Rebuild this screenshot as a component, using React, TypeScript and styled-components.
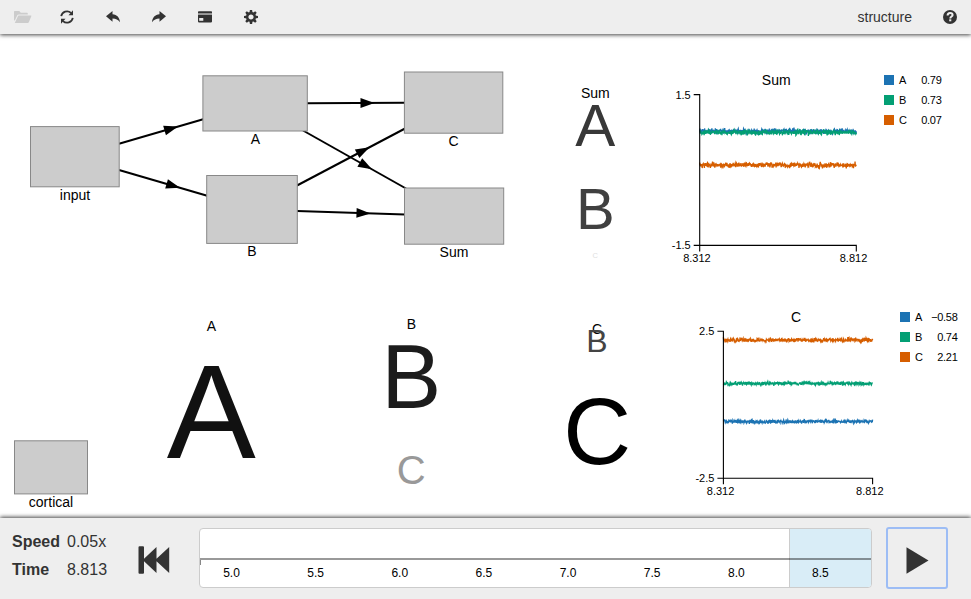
import React from 'react';
import styled, { createGlobalStyle } from 'styled-components';

const GlobalStyle = createGlobalStyle`
  html, body, #root { height: 100%; }
  body {
    margin: 0;
    overflow: hidden;
    background: #fff;
    color: #333;
    font: 14px/20px "Liberation Sans", Arial, sans-serif;
  }
  * { box-sizing: border-box; }
`;

const Page = styled.div`
  display: flex;
  flex-direction: column;
  height: 100vh;
`;

const Toolbar = styled.header`
  position: relative;
  display: flex;
  align-items: center;
  height: 34px;
  padding: 0 14px 0 0;
  background: #eee;
  box-shadow: 0 1px 4px #444;
`;

const ToolButton = styled.button<{ $disabled?: boolean }>`
  display: flex;
  align-items: center;
  justify-content: center;
  width: 46px;
  height: 34px;
  padding: 0 4px 0 0;
  border: 0;
  background: none;
  color: ${(p) => (p.$disabled ? '#ccc' : '#333')};

  &:first-child {
    padding-right: 1px;
  }
`;

const FileName = styled.span`
  margin: 0 31px 0 auto;
`;

const Canvas = styled.main`
  position: relative;
  flex: 1;
`;

const Layer = styled.svg`
  position: absolute;
  inset: 0;
  width: 971px;
  height: 484px;
`;

const Glyph = styled.div<{ $x: number; $y: number; $size: number; $color: string }>`
  position: absolute;
  left: ${(p) => p.$x - 100}px;
  top: ${(p) => p.$y - 34 - p.$size * 0.8465}px;
  width: 200px;
  text-align: center;
  font-size: ${(p) => p.$size}px;
  line-height: 1;
  color: ${(p) => p.$color};
`;

const Legend = styled.ul<{ $x: number; $y: number }>`
  position: absolute;
  left: ${(p) => p.$x}px;
  top: ${(p) => p.$y - 34}px;
  width: 57.5px;
  margin: 0;
  padding: 0;
  display: flex;
  flex-direction: column;
  gap: 10px;
  list-style: none;
  font-size: 11px;
  line-height: 10px;
  color: #000;
`;

const LegendRow = styled.li`
  display: flex;
  align-items: center;
  height: 10px;
`;

const Swatch = styled.span<{ $color: string }>`
  width: 10px;
  height: 10px;
  margin-right: 5px;
  background: ${(p) => p.$color};
`;

const LegendValue = styled.span`
  margin-left: auto;
  letter-spacing: -0.3px;
`;

const Footer = styled.footer`
  position: relative;
  display: flex;
  align-items: flex-start;
  height: 81px;
  padding: 9px 23px 0 12px;
  background: #eee;
  box-shadow: 0 -1px 4px #444;
`;

const Readout = styled.dl`
  display: grid;
  grid-template-columns: 55px 1fr;
  row-gap: 5px;
  width: 126px;
  margin: 3px 0 0;
  font-size: 16px;
  line-height: 23px;
`;

const ReadoutName = styled.dt`
  font-weight: bold;
`;

const ReadoutValue = styled.dd`
  margin: 0;
`;

const RewindButton = styled.button`
  width: 32px;
  height: 28px;
  margin: 19px 29px 0 0;
  padding: 0;
  border: 0;
  background: none;
  color: #333;
`;

const Timeline = styled.div`
  display: flex;
  flex-direction: column;
  position: relative;
  width: 673px;
  height: 60px;
  margin-top: 1px;
  border: 1px solid #ccc;
  border-radius: 4px;
  background: #fff;
  overflow: hidden;
`;

const TimeWindow = styled.div`
  position: absolute;
  top: -1px;
  bottom: -1px;
  right: 0;
  width: 82px;
  border: 1px solid #ccc;
  border-right: 0;
  background: #d9edf7;
`;

const Rail = styled.div`
  position: relative;
  height: 31px;
  border-bottom: 2px solid rgba(0, 0, 0, 0.4);

  &::after {
    content: '';
    position: absolute;
    left: 0;
    top: 31px;
    width: 1px;
    height: 5px;
    background: #888;
  }
`;

const Ticks = styled.div`
  position: relative;
  display: flex;
  padding-top: 4px;
  margin-left: -10.6px;
  font-size: 12px;
  line-height: 18px;
  color: #000;
`;

const Tick = styled.span`
  flex: 0 0 84.15px;
  text-align: center;
`;

const PlayButton = styled.button`
  display: flex;
  align-items: center;
  justify-content: center;
  width: 62px;
  height: 62px;
  margin-left: 14px;
  padding: 4px 0 0 1px;
  border: 2px solid #9dbdf5;
  border-radius: 3px;
  background: none;
  color: #333;
`;

const SERIES_COLORS = ['#1c73b3', '#039f74', '#d65e00'];

const NODES = [
  { name: 'input', x: 30.5, y: 126.6, w: 88.7, h: 60.2, lx: 75, ly: 200 },
  { name: 'A', x: 202.9, y: 75.8, w: 104.4, h: 55.2, lx: 255.3, ly: 144 },
  { name: 'B', x: 206.7, y: 175.5, w: 90.6, h: 67.9, lx: 252, ly: 256 },
  { name: 'C', x: 404.4, y: 72, w: 98.4, h: 61.2, lx: 453.5, ly: 146 },
  { name: 'Sum', x: 404.5, y: 188, w: 99.2, h: 56.2, lx: 454, ly: 257 },
  { name: 'cortical', x: 14.5, y: 440.8, w: 73, h: 53.1, lx: 51, ly: 507 },
];

// [x1, y1, x2, y2, arrow tip x]
const EDGES = [
  [119, 143.7, 204, 119, 178],
  [119, 170, 208, 196, 180],
  [307, 103.2, 405, 102.8, 374.5],
  [303, 130.5, 406, 188.5, 372],
  [297, 185.5, 406, 128, 369.5],
  [297, 211, 405, 214.5, 370.5],
];

const POINTERS = [
  { text: 'Sum', x: 595.3, y: 98, size: 14, color: '#000' },
  { text: 'A', x: 595.3, y: 146.4, size: 60, color: '#383838' },
  { text: 'B', x: 595.3, y: 229, size: 58, color: '#404040' },
  { text: 'C', x: 595.3, y: 258, size: 7.5, color: '#e0e0e0' },
  { text: 'A', x: 211.3, y: 331, size: 14, color: '#000' },
  { text: 'A', x: 211.3, y: 458, size: 133.5, color: '#111' },
  { text: 'B', x: 411.3, y: 329, size: 14, color: '#000' },
  { text: 'B', x: 411.3, y: 408, size: 90, color: '#1c1c1c' },
  { text: 'C', x: 411.3, y: 484, size: 40, color: '#999' },
  { text: 'C', x: 597, y: 334, size: 14, color: '#000' },
  { text: 'B', x: 597, y: 352, size: 32, color: '#444' },
  { text: 'C', x: 597.3, y: 465, size: 94, color: '#000' },
];

type PlotSpec = {
  title: string;
  tx: number;
  ty: number;
  x0: number;
  x1: number;
  y0: number;
  y1: number;
  top: string;
  bottom: string;
  levels: number[];
  noise: number;
  lx: number;
  ly: number;
  values: string[];
};

const PLOTS: PlotSpec[] = [
  {
    title: 'Sum', tx: 776.2, ty: 85, x0: 699.7, x1: 856.3, y0: 94.6, y1: 245.4,
    top: '1.5', bottom: '-1.5', levels: [131.2, 132.4, 165], noise: 1.35,
    lx: 884, ly: 75, values: ['0.79', '0.73', '0.07'],
  },
  {
    title: 'C', tx: 796, ty: 322, x0: 723.4, x1: 872.6, y0: 331.3, y1: 478.3,
    top: '2.5', bottom: '-2.5', levels: [421.5, 383.5, 340], noise: 0.95,
    lx: 900, ly: 312, values: ['−0.58', '0.74', '2.21'],
  },
];

function noisyPath(x0: number, x1: number, y: number, amp: number, seed: number) {
  let s = seed;
  const rand = () => {
    s = (s * 16807) % 2147483647;
    return s / 2147483647;
  };
  const n = 500;
  const pts: string[] = [];
  for (let i = 0; i <= n; i++) {
    const g = rand() + rand() + rand() + rand() - 2;
    pts.push(`${(x0 + ((x1 - x0) * i) / n).toFixed(2)},${(y + g * amp * 1.7).toFixed(2)}`);
  }
  return 'M' + pts.join('L');
}

function Plot({ p, seed }: { p: PlotSpec; seed: number }) {
  return (
    <g>
      <text x={p.tx} y={p.ty} fontSize="14" textAnchor="middle">{p.title}</text>
      <g fontSize="11">
        <text x={p.x0 - 9} y={p.y0 + 3.9} textAnchor="end">{p.top}</text>
        <text x={p.x0 - 9} y={p.y1 + 3.9} textAnchor="end">{p.bottom}</text>
        <text x={p.x0 - 2.8} y={p.y1 + 16.6} textAnchor="middle">8.312</text>
        <text x={p.x1 - 2.8} y={p.y1 + 16.6} textAnchor="middle">8.812</text>
      </g>
      {p.levels.map((y, i) => (
        <path
          key={i}
          d={noisyPath(p.x0, p.x1, y, p.noise, seed + i * 977)}
          fill="none"
          stroke={SERIES_COLORS[i]}
          strokeWidth="1.3"
        />
      ))}
      <path
        d={`M${p.x0 - 6} ${p.y0}H${p.x0}V${p.y1 + 6}M${p.x0 - 6} ${p.y1}H${p.x1}V${p.y1 + 6}`}
        fill="none" stroke="#000" strokeWidth="1.1"
      />
    </g>
  );
}

function Edge({ e }: { e: number[] }) {
  const [x1, y1, x2, y2, tx] = e;
  const ty = y1 + ((y2 - y1) * (tx - x1)) / (x2 - x1);
  const angle = (Math.atan2(y2 - y1, x2 - x1) * 180) / Math.PI;
  return (
    <g>
      <line x1={x1} y1={y1} x2={x2} y2={y2} stroke="#000" strokeWidth="2" />
      <path d="M0 0L-14 -4.9V4.9Z" transform={`translate(${tx} ${ty}) rotate(${angle})`} />
    </g>
  );
}

const FolderIcon = () => (
  <svg width="18" height="14" viewBox="0 0 18 14" fill="currentColor">
    <path d="M0 10V1.7Q0 1 .7 1H5.3L6.8 2.7H13Q13.8 2.7 13.8 3.5V4.5H4.6Q3.7 4.5 3.3 5.2L.7 10.8Z" />
    <path d="M4.8 5.4H17Q17.6 5.4 17.4 6L14.8 12.3Q14.5 13 13.7 13H.8L4 6Q4.2 5.4 4.8 5.4Z" />
  </svg>
);

const RefreshIcon = () => (
  <svg width="14" height="14" viewBox="0 0 14 14" fill="none" stroke="currentColor" strokeWidth="1.8">
    <path d="M1.2 6.2A5.9 5.9 0 0 1 11 2.9M12.8 7.8A5.9 5.9 0 0 1 3 11.1" />
    <path d="M13 .3V5.2H8.5ZM1 13.7V8.8H5.5Z" fill="currentColor" stroke="none" />
  </svg>
);

const UndoIcon = ({ flip }: { flip?: boolean }) => (
  <svg width="14" height="12" viewBox="0 0 14 12" fill="currentColor">
    <path
      transform={flip ? 'matrix(-1 0 0 1 14 0)' : undefined}
      d="M0 5.3L6.5 0V3.2C11 3.4 13.6 6.5 14 11.2C12 8.6 10 7.6 6.5 7.5V10.8Z"
    />
  </svg>
);

const PanelIcon = () => (
  <svg width="14" height="12" viewBox="0 0 14 12">
    <path d="M0 1Q0 .2.8 .2H13.2Q14 .2 14 1V10.6Q14 11.4 13.2 11.4H.8Q0 11.4 0 10.6Z" fill="#333" />
    <path d="M0 2.2H14V3.9H0Z" fill="#aaa" />
    <path d="M1.2 7H5.3V9.8H1.2Z" fill="#eee" />
  </svg>
);

const CogIcon = () => (
  <svg width="14" height="14" viewBox="-7 -7 14 14" fill="currentColor">
    {[0, 45, 90, 135].map((a) => (
      <path key={a} d="M-1.1 -7H1.1L1.6 -4H-1.6ZM-1.1 7H1.1L1.6 4H-1.6Z" transform={`rotate(${a})`} />
    ))}
    <circle r="3.8" fill="none" stroke="currentColor" strokeWidth="2.4" />
  </svg>
);

const HelpIcon = () => (
  <svg width="14" height="14" viewBox="0 0 14 14">
    <circle cx="7" cy="7" r="7" fill="#333" />
    <path d="M4.6 5.5C4.6 3.8 5.6 3 7.1 3C8.6 3 9.6 3.8 9.6 5C9.6 6.6 7.3 6.5 7.3 8.4" fill="none" stroke="#eee" strokeWidth="2" />
    <path d="M6.2 9.3H8.3V11.3H6.2Z" fill="#eee" />
  </svg>
);

export default function App() {
  return (
    <Page>
      <GlobalStyle />
      <Toolbar>
        <ToolButton $disabled aria-label="Open"><FolderIcon /></ToolButton>
        <ToolButton aria-label="Reload"><RefreshIcon /></ToolButton>
        <ToolButton aria-label="Undo"><UndoIcon /></ToolButton>
        <ToolButton aria-label="Redo"><UndoIcon flip /></ToolButton>
        <ToolButton aria-label="Panel"><PanelIcon /></ToolButton>
        <ToolButton aria-label="Settings"><CogIcon /></ToolButton>
        <FileName>structure</FileName>
        <HelpIcon />
      </Toolbar>
      <Canvas>
        <Layer viewBox="0 34 971 484">
          {EDGES.map((e, i) => <Edge key={i} e={e} />)}
          {NODES.map((n) => (
            <rect key={n.name} x={n.x} y={n.y} width={n.w} height={n.h} fill="#ccc" stroke="#888" />
          ))}
          {PLOTS.map((p, i) => <Plot key={p.title} p={p} seed={4321 + i * 7919} />)}
        </Layer>
        {NODES.map((n) => (
          <Glyph key={n.name} $x={n.lx} $y={n.ly} $size={14} $color="#000">{n.name}</Glyph>
        ))}
        {POINTERS.map((g, i) => (
          <Glyph key={i} $x={g.x} $y={g.y} $size={g.size} $color={g.color}>{g.text}</Glyph>
        ))}
        {PLOTS.map((p) => (
          <Legend key={p.title} $x={p.lx} $y={p.ly}>
            {p.values.map((v, i) => (
              <LegendRow key={i}>
                <Swatch $color={SERIES_COLORS[i]} />
                {'ABC'[i]}
                <LegendValue>{v}</LegendValue>
              </LegendRow>
            ))}
          </Legend>
        ))}
      </Canvas>
      <Footer>
        <Readout>
          <ReadoutName>Speed</ReadoutName>
          <ReadoutValue>0.05x</ReadoutValue>
          <ReadoutName>Time</ReadoutName>
          <ReadoutValue>8.813</ReadoutValue>
        </Readout>
        <RewindButton aria-label="Rewind">
          <svg width="32" height="28" viewBox="0 0 32 28" fill="currentColor" display="block">
            <path d="M.5 1.2Q.5 .2 1.5 .2H5Q6 .2 6 1.2V12.8L18.5 1V12.8L31.2 1V27L18.5 15.2V27L6 15.2V26.8Q6 27.8 5 27.8H1.5Q.5 27.8 .5 26.8Z" />
          </svg>
        </RewindButton>
        <Timeline>
          <TimeWindow />
          <Rail />
          <Ticks>
            {['5.0', '5.5', '6.0', '6.5', '7.0', '7.5', '8.0', '8.5'].map((t) => <Tick key={t}>{t}</Tick>)}
          </Ticks>
        </Timeline>
        <PlayButton aria-label="Play">
          <svg width="23" height="27" viewBox="0 0 23 27" fill="currentColor">
            <path d="M.5 .2L22.5 13.5L.5 26.8Z" />
          </svg>
        </PlayButton>
      </Footer>
    </Page>
  );
}
